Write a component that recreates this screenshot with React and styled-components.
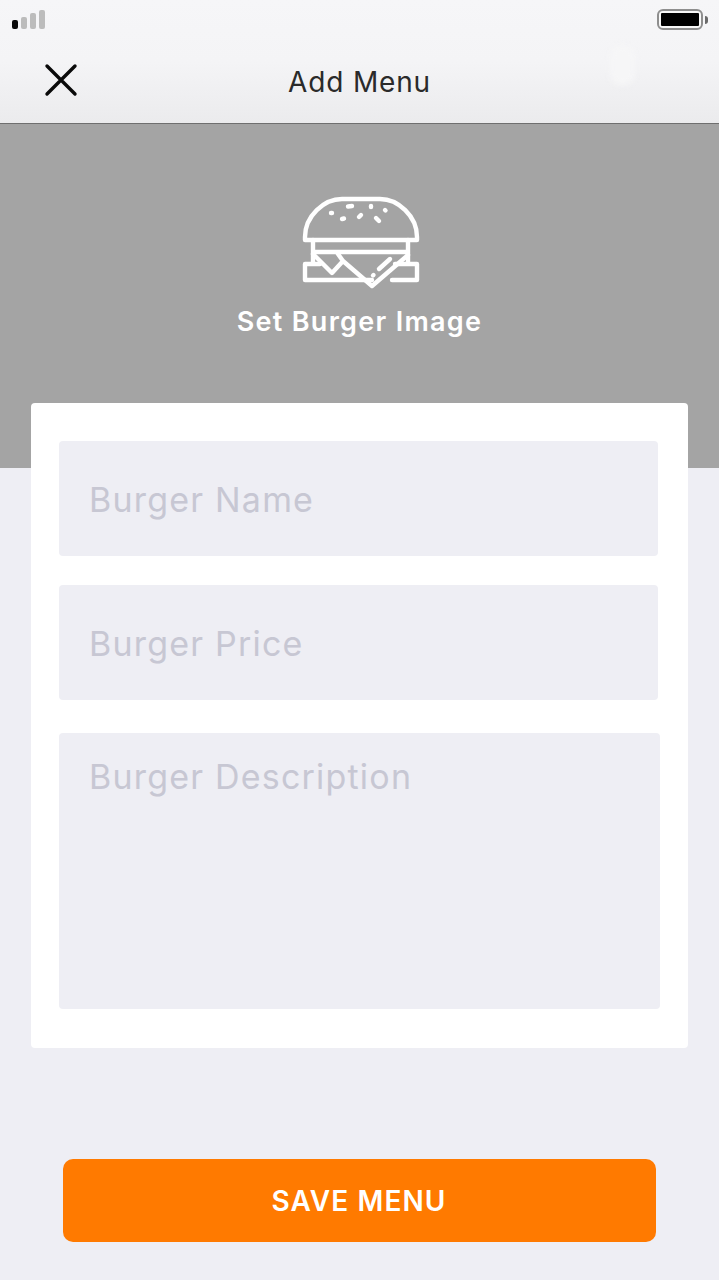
import React from "react";
import styled, { createGlobalStyle } from "styled-components";

const Global = createGlobalStyle`
  html, body { margin: 0; padding: 0; background: #eeeef4; }
  * { box-sizing: border-box; }
`;

const Page = styled.div`
  width: 719px;
  height: 1280px;
  overflow: hidden;
  background: #eeeef4;
  font-family: Inter, "Noto Sans", sans-serif;
  display: flex;
  flex-direction: column;
`;

const Header = styled.header`
  position: relative;
  height: 124px;
  flex: none;
  background: linear-gradient(#f6f6f8 0%, #f4f4f6 50%, #ebebed 100%);
  border-bottom: 1px solid #6f6f6f;
  &::after {
    content: "";
    position: absolute;
    left: 610px;
    top: 45px;
    width: 25px;
    height: 40px;
    border-radius: 12px;
    background: #f6f6f7;
    filter: blur(3px);
  }
`;

const StatusBar = styled.div`
  height: 32px;
  padding: 9px 12px 0;
  display: flex;
  justify-content: space-between;
  align-items: flex-start;
`;

const Signal = styled.div`
  display: flex;
  align-items: flex-end;
  gap: 3px;
  height: 20px;
`;

const Bar = styled.span`
  width: 6px;
  height: ${(p) => p.$h}px;
  border-radius: 2px;
  background: ${(p) => (p.$on ? "#0a0a0a" : "#bcbcbc")};
`;

const Battery = styled.div`
  display: flex;
  align-items: center;
  gap: 2px;
  margin-right: -1px;
`;

const BatteryBody = styled.div`
  width: 46px;
  height: 21px;
  border: 2px solid #8e8e8e;
  border-radius: 6px;
  padding: 2px;
  background: #f8f8f8;
  &::before {
    content: "";
    display: block;
    height: 100%;
    background: #000;
    border-radius: 1px;
  }
`;

const BatteryNub = styled.span`
  width: 3px;
  height: 8px;
  background: #6a6a6a;
  border-radius: 0 3px 3px 0;
`;

const NavRow = styled.div`
  height: 91px;
  padding-top: 9px;
  display: grid;
  grid-template-columns: 1fr auto 1fr;
  align-items: center;
`;

const CloseButton = styled.button`
  justify-self: start;
  margin: 0 0 4px 44px;
  width: 34px;
  height: 34px;
  padding: 0;
  border: 0;
  background: none;
  display: block;
`;

const Title = styled.h1`
  margin: 0;
  font-size: 28px;
  line-height: 40px;
  font-weight: 400;
  letter-spacing: 0.85px;
  color: #2a2a2a;
  z-index: 1;
`;

const Hero = styled.section`
  height: 344px;
  flex: none;
  background: #a4a4a4;
  display: flex;
  flex-direction: column;
  align-items: center;
  padding-top: 67px;
`;

const HeroLabel = styled.div`
  margin-top: 13px;
  font-size: 27px;
  line-height: 36px;
  font-weight: 600;
  letter-spacing: 1.3px;
  color: #fff;
`;

const Main = styled.main`
  flex: 1;
  display: flex;
  flex-direction: column;
  padding: 0 31px;
  margin-top: -65px;
`;

const Card = styled.div`
  height: 645px;
  background: #fff;
  border-radius: 4px;
  padding: 38px 28px 39px;
  display: flex;
  flex-direction: column;
`;

const Field = styled.div`
  height: ${(p) => p.$h}px;
  flex: none;
  margin-top: ${(p) => p.$gap || 0}px;
  margin-right: ${(p) => p.$inset || 0}px;
  background: #eeeef4;
  border-radius: 4px;
  padding: 0 30px;
  display: flex;
  align-items: ${(p) => (p.$multi ? "flex-start" : "center")};
  padding-top: ${(p) => (p.$multi ? 22 : 2)}px;
  font-size: 34px;
  line-height: 44px;
  letter-spacing: 1.2px;
  color: #c7c7d3;
`;

const SaveButton = styled.button`
  flex: none;
  align-self: center;
  width: 593px;
  height: 83px;
  margin-top: 111px;
  margin-right: 1px;
  border: 0;
  border-radius: 10px;
  background: #ff7a00;
  color: #fff;
  font-family: inherit;
  font-size: 28px;
  font-weight: 600;
  letter-spacing: 1.1px;
`;

const BurgerIcon = () => (
  <svg width="120" height="100" viewBox="0 0 120 100" fill="none" stroke="#fff" strokeWidth="4.4" strokeLinejoin="round" strokeLinecap="round" style={{ display: "block" }}>
    <path d="M5 49 V46 C5 25 24 8 42 8 H80 C98 8 117 25 117 46 V49 Z" />
    <path d="M13 49 V72 M108 49 V72 M13 61 H108" />
    <path d="M20 73 H5 V89 H72 M92 89 H117 V73 H95" />
    <path d="M13 63 L32 82 L43 70 L38 63 M43 70 L72 95 L108 64" />
    <path d="M79 78 L90 68 M73 84.5 L73.5 84" />
    <path d="M31 22 L32 22 M48 15.5 L52 15 M42 28 L44 27.5 M59 26 L61 24 M71 15 L71 16 M85 19 L85.5 19.5 M76 27 L79 30" />
  </svg>
);

export default function App() {
  return (
    <Page>
      <Global />
      <Header>
        <StatusBar>
          <Signal>
            <Bar $h={9} $on />
            <Bar $h={12} />
            <Bar $h={16} />
            <Bar $h={19} />
          </Signal>
          <Battery>
            <BatteryBody />
            <BatteryNub />
          </Battery>
        </StatusBar>
        <NavRow>
          <CloseButton aria-label="Close">
            <svg width="34" height="34" viewBox="0 0 34 34" fill="none" stroke="#0a0a0a" strokeWidth="3.4" strokeLinecap="round" style={{ display: "block" }}>
              <path d="M3 3 L31 31 M31 3 L3 31" />
            </svg>
          </CloseButton>
          <Title>Add Menu</Title>
        </NavRow>
      </Header>
      <Hero>
        <BurgerIcon />
        <HeroLabel>Set Burger Image</HeroLabel>
      </Hero>
      <Main>
        <Card>
          <Field $h={115} $inset={2}>Burger Name</Field>
          <Field $h={115} $gap={29} $inset={2}>Burger Price</Field>
          <Field $h={276} $gap={33} $multi>Burger Description</Field>
        </Card>
        <SaveButton>SAVE MENU</SaveButton>
      </Main>
    </Page>
  );
}
